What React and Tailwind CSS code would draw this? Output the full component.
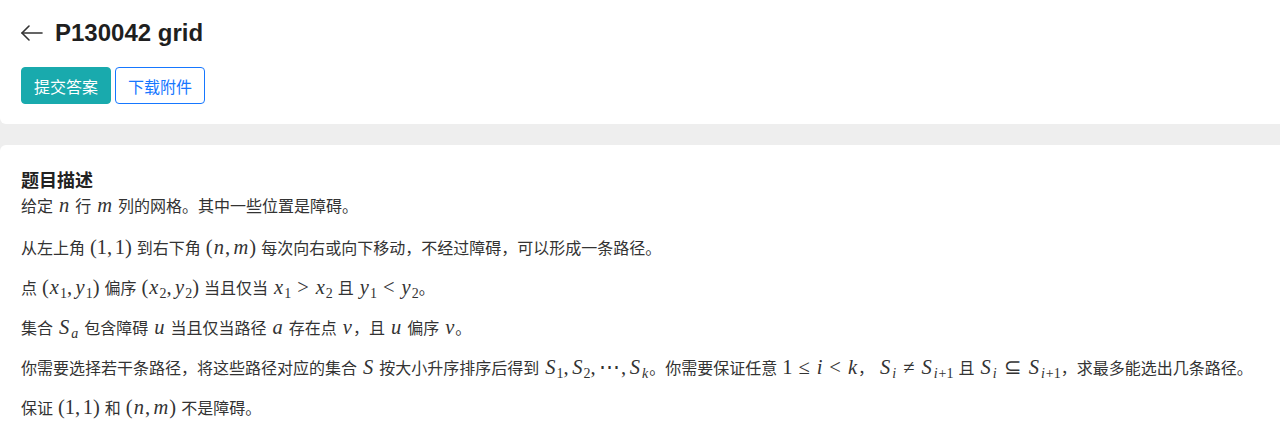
import React from 'react';

const I = ({ children }) => <i className="italic px-[1px]">{children}</i>;
const R = ({ children }) => <span className="not-italic">{children}</span>;
const Sub = ({ children }) => <sub className="text-[14px]">{children}</sub>;
const Rel = ({ children }) => <span className="mx-[6px]">{children}</span>;
const Cm = () => <span className="mr-[2.5px]">,</span>;

function M({ children, tight }) {
  return (
    <span
      className={
        tight
          ? "font-['Liberation_Serif',serif] text-[20.5px] leading-none ml-[5px] whitespace-nowrap"
          : "font-['Liberation_Serif',serif] text-[20.5px] leading-none mx-[5px] whitespace-nowrap"
      }
    >
      {children}
    </span>
  );
}

function BackArrow() {
  return (
    <svg width="22" height="16" viewBox="0 0 22 16" fill="none" stroke="#333" strokeWidth="1.6" strokeLinecap="round" strokeLinejoin="round">
      <path d="M1 8h20" />
      <path d="M8 1 1 8l7 7" />
    </svg>
  );
}

export default function App() {
  return (
    <div className="min-h-screen bg-[#eeeeee] font-['Liberation_Sans','Noto_Sans_CJK_SC',sans-serif] text-[#333]">
      <div className="bg-white rounded-bl-md px-[21px] pt-[17px] pb-[20px]">
        <div className="flex items-center gap-[12px] h-[32px]">
          <BackArrow />
          <h1 className="text-[24px] font-bold text-[#1f1f1f] leading-[32px]">P130042 grid</h1>
        </div>
        <div className="flex gap-[4px] mt-[18px]">
          <button className="h-[37px] px-[12px] rounded-[4px] bg-[#19aaad] border border-[#19aaad] text-white text-[16px] font-['Noto_Sans_CJK_SC',sans-serif]">
            提交答案
          </button>
          <button className="h-[37px] px-[12px] rounded-[4px] bg-white border border-[#1677ff] text-[#1677ff] text-[16px] font-['Noto_Sans_CJK_SC',sans-serif]">
            下载附件
          </button>
        </div>
      </div>

      <div className="bg-white rounded-tl-md mt-[21px] px-[21px] pt-[23px] pb-[10px] h-[280px]">
        <h2 className="text-[18px] font-bold text-[#222] leading-[27px]">题目描述</h2>
        <div className="text-[16px] leading-[24px]">
          <p className="mb-[18px]">
            给定<M><I>n</I></M>行<M><I>m</I></M>列的网格。其中一些位置是障碍。
          </p>
          <p className="mb-[16px]">
            从左上角<M>(1<Cm />1)</M>到右下角<M>(<I>n</I><Cm /><I>m</I>)</M>每次向右或向下移动，不经过障碍，可以形成一条路径。
          </p>
          <p className="mb-[16px]">
            点<M>(<I>x</I><Sub>1</Sub><Cm /><I>y</I><Sub>1</Sub>)</M>偏序<M>(<I>x</I><Sub>2</Sub><Cm /><I>y</I><Sub>2</Sub>)</M>当且仅当
            <M><I>x</I><Sub>1</Sub><Rel>&gt;</Rel><I>x</I><Sub>2</Sub></M>且<M tight><I>y</I><Sub>1</Sub><Rel>&lt;</Rel><I>y</I><Sub>2</Sub></M>。
          </p>
          <p className="mb-[16px]">
            集合<M><I>S</I><Sub><I>a</I></Sub></M>包含障碍<M><I>u</I></M>当且仅当路径<M><I>a</I></M>存在点<M tight><I>v</I></M>，且<M><I>u</I></M>偏序<M tight><I>v</I></M>。
          </p>
          <p className="mb-[16px]">
            你需要选择若干条路径，将这些路径对应的集合<M><I>S</I></M>按大小升序排序后得到
            <M tight>
              <I>S</I><Sub>1</Sub><Cm /><I>S</I><Sub>2</Sub><Cm />
              <R><span className="inline-block w-[23px] text-center">⋯</span></R>
              <Cm /><I>S</I><Sub><I>k</I></Sub>
            </M>
            。你需要保证任意
            <M tight>1<Rel>≤</Rel><I>i</I><Rel>&lt;</Rel><I>k</I></M>，
            <M><I>S</I><Sub><I>i</I></Sub><Rel>≠</Rel><I>S</I><Sub><I>i</I>+1</Sub></M>且
            <M tight><I>S</I><Sub><I>i</I></Sub><Rel>⊆</Rel><I>S</I><Sub><I>i</I>+1</Sub></M>，求最多能选出几条路径。
          </p>
          <p className="mb-[16px]">
            保证<M>(1<Cm />1)</M>和<M>(<I>n</I><Cm /><I>m</I>)</M>不是障碍。
          </p>
        </div>
      </div>
    </div>
  );
}
